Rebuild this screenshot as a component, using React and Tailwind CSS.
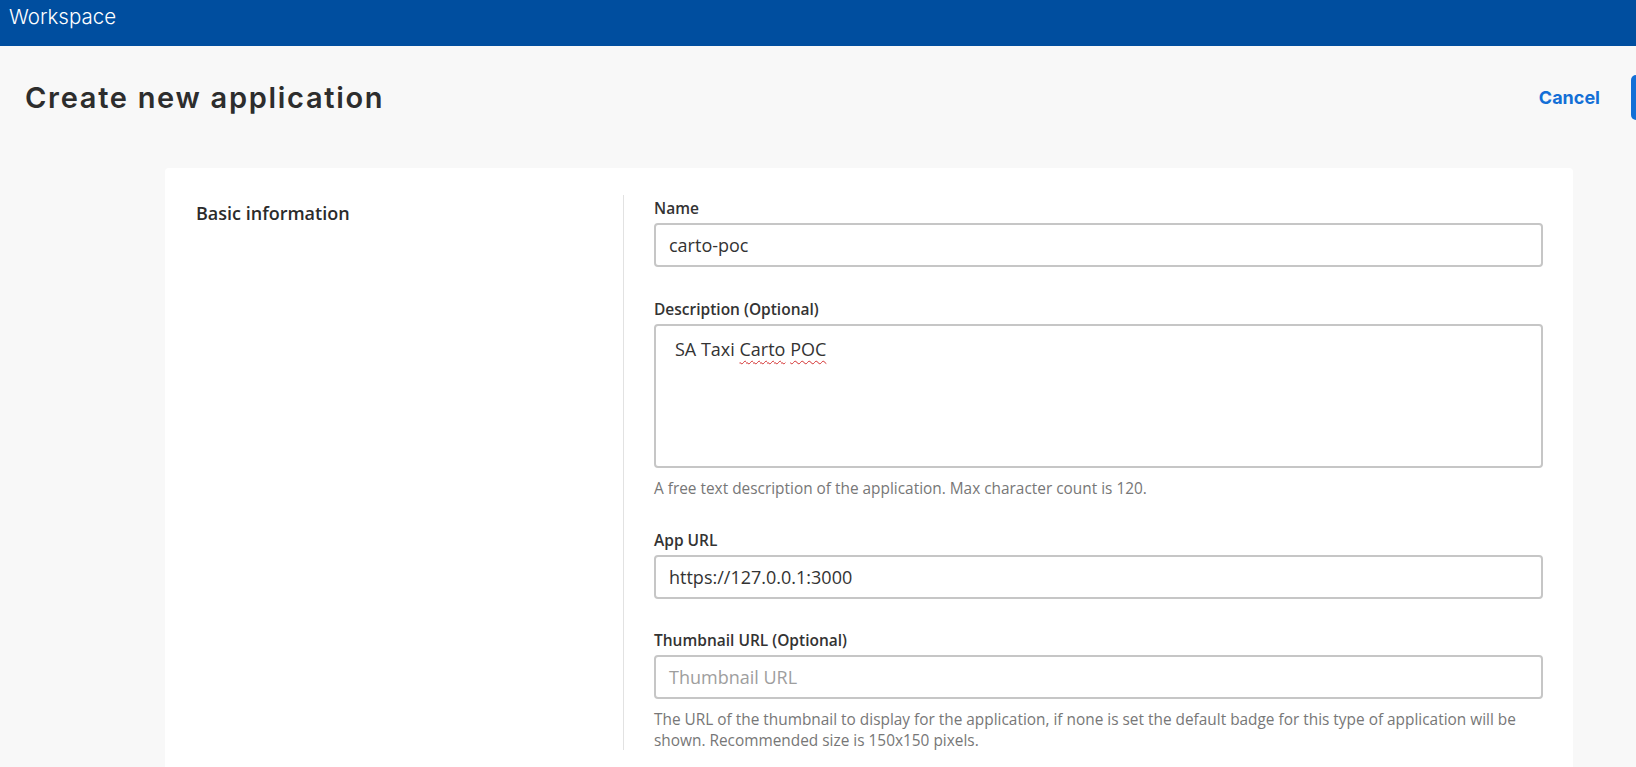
import React from "react";

const body = { fontFamily: '"Open Sans", "Noto Sans", sans-serif' };
const head = { fontFamily: 'Inter, "Liberation Sans", sans-serif' };

function Label({ children }) {
  return (
    <div className="text-[15.5px] leading-[20px] font-semibold text-[#333333] mb-[5px]">{children}</div>
  );
}

function Input({ value, placeholder }) {
  return (
    <div className="h-[44px] w-full rounded-[4px] border-2 border-[#c6c6c6] bg-white flex items-center px-[13px] text-[18px] leading-[24px]">
      {value ? (
        <span className="text-[#333333]">{value}</span>
      ) : (
        <span className="text-[#9e9e9e]">{placeholder}</span>
      )}
    </div>
  );
}

function Helper({ children }) {
  return <div className="mt-[10px] text-[15.4px] leading-[21px] text-[#777777]">{children}</div>;
}

export default function App() {
  const squiggle =
    "underline decoration-wavy decoration-[#d32f2f] decoration-1 underline-offset-[4px]";
  return (
    <div className="w-[1636px] h-[767px] overflow-hidden bg-[#f8f8f8]" style={body}>
      <header className="h-[46px] bg-[#004e9f] pl-[9px] pt-[4px]">
        <span className="text-[20.5px] leading-[26px] font-light text-white" style={head}>
          Workspace
        </span>
      </header>

      <div className="h-[103px] flex items-center justify-between pl-[25px]">
        <h1 className="text-[29px] font-semibold text-[#2d2d2d] tracking-[1.7px]" style={head}>
          Create new application
        </h1>
        <div className="flex items-center gap-[31px] mr-[-135px]">
          <button className="text-[18px] font-bold text-[#136fd6]" style={head}>
            Cancel
          </button>
          <div className="w-[140px] h-[45px] rounded-[5px] bg-[#136fd6]" />
        </div>
      </div>

      <div className="mt-[19px] ml-[165px] w-[1408px] h-[620px] rounded-[4px] bg-white flex pt-[27px]">
        <div className="w-[459px] pl-[31px] pt-[6px] border-r border-[#e2e2e2] self-start h-[555px]">
          <div className="text-[18px] leading-[24px] font-semibold text-[#2b2b2b]">Basic information</div>
        </div>

        <div className="flex-1 pl-[30px] pr-[30px] pt-[3px]">
          <Label>Name</Label>
          <Input value="carto-poc" />

          <div className="mt-[32px]">
            <Label>Description (Optional)</Label>
            <div className="h-[144px] w-full rounded-[4px] border-2 border-[#c6c6c6] bg-white pl-[19px] pt-[11px] text-[18px] leading-[24px] text-[#333333]">
              SA Taxi <span className={squiggle}>Carto</span> <span className={squiggle}>POC</span>
            </div>
            <Helper>A free text description of the application. Max character count is 120.</Helper>
          </div>

          <div className="mt-[31px]">
            <Label>App URL</Label>
            <Input value="https://127.0.0.1:3000" />
          </div>

          <div className="mt-[31px]">
            <Label>Thumbnail URL (Optional)</Label>
            <Input placeholder="Thumbnail URL" />
            <Helper>
              The URL of the thumbnail to display for the application, if none is set the default badge for this type of application will be
              <br />
              shown. Recommended size is 150x150 pixels.
            </Helper>
          </div>
        </div>
      </div>
    </div>
  );
}
